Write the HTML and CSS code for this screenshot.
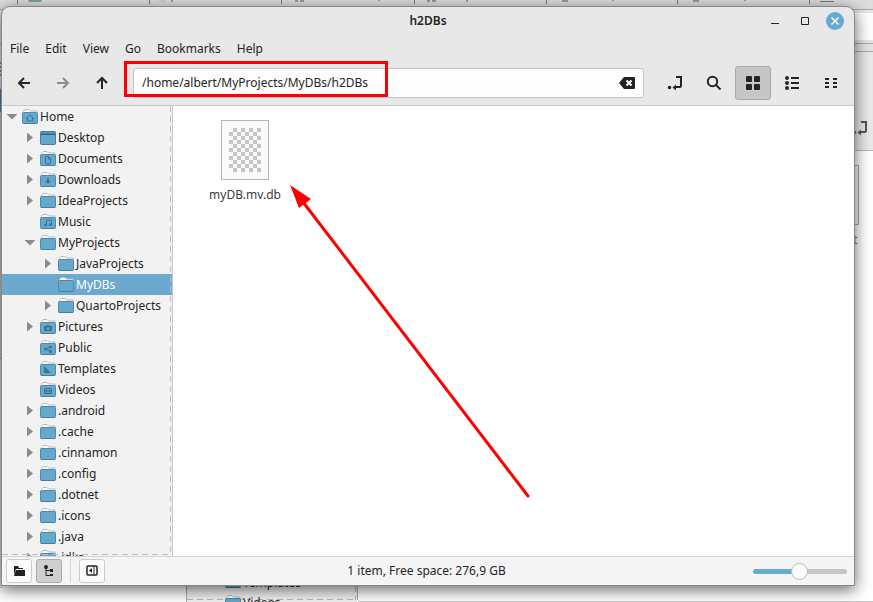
FILE: index.html
```html
<!DOCTYPE html>
<html lang="en">
<head>
<meta charset="utf-8">
<title>h2DBs</title>
<link rel="stylesheet" href="styles.css">
</head>
<body>
<svg class="defs" aria-hidden="true">
  <defs>
    <symbol id="folder" viewBox="0 0 16 16">
      <path d="M1.500 5V2.500L3 .5h4l1.500 1.500H15v3" fill="#fff" stroke="#b8b8b8"/>
      <rect x=".5" y="3.500" width="15" height="11" rx="1" fill="#66a7cc" stroke="#4b8bae"/>
      <path d="M1 14.500h14" stroke="#437f9f"/>
    </symbol>
    <symbol id="enter" viewBox="0 0 16 16">
      <path d="M9 2h5v9q0 1-1 1H8" fill="none" stroke="currentColor" stroke-width="2"/>
      <path d="M5.500 12.500L9 9.500v6z" fill="currentColor"/><circle cx="2.500" cy="12.500" r="1.800" fill="currentColor"/>
    </symbol>
  </defs>
</svg>

<svg class="backdrop" aria-hidden="true">
  <rect width="100%" height="100%" fill="#fff"/>
  <rect width="100%" height="9" fill="#dcdcdc"/>
  <rect x="0" y="9" width="8" height="80" fill="#e4e4e4"/>
  <path d="M0 9.500h6M0 43.500h6M0 88h6" stroke="#aaa"/>
  <path d="M0 63h2M0 67h2M0 71h2M0 75h2" stroke="#333"/>
  <rect y="89" width="3" height="23" fill="#4a80c8"/>
  <rect y="112" width="3" height="246" fill="#cfc8b8"/>
  <rect y="358" width="3" height="230" fill="#ddd"/>
  <path d="M0 358.500h2" stroke="#888"/>
  <path d="M17.500 0v4M149.500 0v4M281.500 0v4M414.500 0v4M546.500 0v4M677.500 0v4M809.500 0v4" stroke="#777"/>
  <path d="M28 0h14l-1 2H29z" fill="#78a39a"/>
  <path d="M295 1h3M300 1h4M427 1h3M432 1h4M562 1h6M693 1h6M171 1h2M378 0h2M466 1h2M612 0h2M744 0h2" stroke="#555"/>
  <path d="M820 1.500h14" stroke="#777"/>
  <path d="M159 1h7" stroke="#b4bfd2"/>
  <rect x="840" y="9" width="100%" height="43" fill="#e4e4e4"/>
  <path d="M840 9.500h9999M840 43.500h9999M840 51.500h9999" stroke="#aaa"/>
  <rect x="840" y="13" width="100%" height="27" fill="#fdfdfd"/>
  <rect x="840" y="52" width="100%" height="98" fill="#e8e8e8"/>
  <path d="M840 150.500h9999" stroke="#bbb"/>
  <use href="#enter" x="852" y="120" width="16" height="16" color="#555"/>
  <rect x="811.500" y="165.500" width="47" height="59" fill="#f7f7f7" stroke="#aaa"/>
  <text x="853" y="244" class="backdrop-label teal">t</text>
  <rect x="186" y="580" width="171" height="30" fill="#f2f2f2"/>
  <path d="M186.500 580v40M357.500 580v20" stroke="#aaa"/>
  <path d="M358 601.500h9999" stroke="#ccc"/>
  <path d="M187 599.500h169M355.500 586v14" stroke="#bbb" stroke-dasharray="6 4"/>
  <use href="#folder" x="225" y="573" width="16" height="16"/>
  <use href="#folder" x="225" y="595" width="16" height="16"/>
  <text x="243" y="587" class="backdrop-label">Templates</text>
  <text x="243" y="607" class="backdrop-label">Videos</text>
</svg>

<main class="window">
  <header class="titlebar">
    <h1>h2DBs</h1>
    <div class="controls">
      <button aria-label="Minimize"><svg width="18" height="18"><path d="M5 11.500h8" stroke="#222"/></svg></button>
      <button aria-label="Maximize"><svg width="18" height="18"><path d="M5.500 5.500h7v7h-7z" fill="none" stroke="#222"/></svg></button>
      <button class="close" aria-label="Close"><svg width="18" height="18"><path d="M5.500 5.500l7 7m0-7l-7 7" stroke="#fff" stroke-width="1.500"/></svg></button>
    </div>
  </header>

  <nav class="menubar" aria-label="Menu">
    <button>File</button><button>Edit</button><button>View</button><button>Go</button><button>Bookmarks</button><button>Help</button>
  </nav>

  <div class="toolbar">
    <button class="tool" aria-label="Back"><svg viewBox="0 0 16 16"><path d="M14 8H3M8 3L3 8l5 5" fill="none" stroke="currentColor" stroke-width="2"/></svg></button>
    <button class="tool dim" aria-label="Forward"><svg viewBox="0 0 16 16"><path d="M2 8h11M8 3l5 5-5 5" fill="none" stroke="currentColor" stroke-width="2"/></svg></button>
    <button class="tool" aria-label="Up"><svg viewBox="0 0 16 16"><path d="M8 14V3M3 8l5-5 5 5" fill="none" stroke="currentColor" stroke-width="2"/></svg></button>
    <div class="location">
      <input type="text" aria-label="Location" value="/home/albert/MyProjects/MyDBs/h2DBs">
      <button aria-label="Clear"><svg width="16" height="16"><path d="M5 2h10q1 0 1 1v10q0 1-1 1H5L0 8z" fill="#222"/><path d="M7.500 5.500l5 5m0-5l-5 5" stroke="#fff" stroke-width="2"/></svg></button>
    </div>
    <button class="tool" aria-label="Toggle location entry"><svg><use href="#enter"/></svg></button>
    <button class="tool" aria-label="Search"><svg viewBox="0 0 16 16"><circle cx="6.500" cy="6.500" r="4.700" fill="none" stroke="currentColor" stroke-width="2"/><path d="M10 10l4.500 4.500" stroke="currentColor" stroke-width="2"/></svg></button>
    <button class="tool active" aria-label="Icon view"><svg viewBox="0 0 16 16" fill="currentColor"><rect x="1" y="1" width="6" height="6" rx="1"/><rect x="9" y="1" width="6" height="6" rx="1"/><rect x="1" y="9" width="6" height="6" rx="1"/><rect x="9" y="9" width="6" height="6" rx="1"/></svg></button>
    <button class="tool" aria-label="List view"><svg viewBox="0 0 16 16" fill="currentColor"><circle cx="3" cy="3" r="2"/><circle cx="3" cy="8" r="2"/><circle cx="3" cy="13" r="2"/><path d="M7 2h8v2H7zM7 7h8v2H7zM7 12h8v2H7z"/></svg></button>
    <button class="tool" aria-label="Compact view"><svg viewBox="0 0 16 16" fill="currentColor"><path d="M2 3h4v2H2zM2 7h4v2H2zM2 11h4v2H2zM10 3h4v2h-4zM10 7h4v2h-4zM10 11h4v2h-4z"/></svg></button>
  </div>

  <div class="content">
    <nav class="sidebar" aria-label="Folders">
      <ul class="tree">
        <li><div class="row"><button class="twist open" aria-label="Collapse"></button><svg><use href="#folder"/><path d="M4 9.500L8 6l4 3.500M5.500 8.500V12h5V8.500" fill="none" stroke="#3b7592"/></svg><a href="#home">Home</a></div>
          <ul>
            <li><div class="row"><button class="twist" aria-label="Expand"></button><svg><rect x=".5" y="1.500" width="15" height="13" rx="1" fill="#66a7cc" stroke="#437f9f"/><path d="M1 2h14v2H1z" fill="#4f8db0"/><path d="M1 4.500h14" stroke="#2f5f79"/></svg><a href="#desktop">Desktop</a></div></li>
            <li><div class="row"><button class="twist" aria-label="Expand"></button><svg><use href="#folder"/><path d="M5.500 5.500h3l2 2v5h-5zM8.500 6v2h2" fill="none" stroke="#3b7592"/></svg><a href="#documents">Documents</a></div></li>
            <li><div class="row"><button class="twist" aria-label="Expand"></button><svg><use href="#folder"/><path d="M7 6h2v3h2l-3 3-3-3h2z" fill="#3b7592"/></svg><a href="#downloads">Downloads</a></div></li>
            <li><div class="row"><button class="twist" aria-label="Expand"></button><svg><use href="#folder"/></svg><a href="#idea">IdeaProjects</a></div></li>
            <li><div class="row"><span class="twist none"></span><svg><use href="#folder"/><path d="M6.500 11V6h5v4" fill="none" stroke="#3b7592"/><circle cx="5.500" cy="11" r="1.500" fill="#3b7592"/><circle cx="10.500" cy="10.500" r="1.500" fill="#3b7592"/></svg><a href="#music">Music</a></div></li>
            <li><div class="row"><button class="twist open" aria-label="Collapse"></button><svg><use href="#folder"/></svg><a href="#myprojects">MyProjects</a></div>
              <ul>
                <li><div class="row"><button class="twist" aria-label="Expand"></button><svg><use href="#folder"/></svg><a href="#java">JavaProjects</a></div></li>
                <li><div class="row selected"><span class="twist none"></span><svg><use href="#folder"/></svg><a href="#mydbs">MyDBs</a></div></li>
                <li><div class="row"><button class="twist" aria-label="Expand"></button><svg><use href="#folder"/></svg><a href="#quarto">QuartoProjects</a></div></li>
              </ul>
            </li>
            <li><div class="row"><button class="twist" aria-label="Expand"></button><svg><use href="#folder"/><path d="M4 7h2l1-1h2l1 1h2v5H4z" fill="#3b7592"/><circle cx="8" cy="9.500" r="1.300" fill="#66a7cc"/></svg><a href="#pictures">Pictures</a></div></li>
            <li><div class="row"><span class="twist none"></span><svg><use href="#folder"/><path d="M10.500 7L6 9l4.500 2.500" fill="none" stroke="#3b7592"/><g fill="#3b7592"><circle cx="5.500" cy="9" r="1.500"/><circle cx="10.500" cy="7" r="1.500"/><circle cx="10.500" cy="11.500" r="1.500"/></g></svg><a href="#public">Public</a></div></li>
            <li><div class="row"><span class="twist none"></span><svg><use href="#folder"/><path d="M4 5l7 7H4z" fill="#3b7592"/></svg><a href="#templates">Templates</a></div></li>
            <li><div class="row"><span class="twist none"></span><svg><use href="#folder"/><path d="M4.500 6.500h7v5h-7zM4 9h8M6.500 6v6M9.500 6v6" fill="none" stroke="#3b7592"/></svg><a href="#videos">Videos</a></div></li>
            <li><div class="row"><button class="twist" aria-label="Expand"></button><svg><use href="#folder"/></svg><a href="#android">.android</a></div></li>
            <li><div class="row"><button class="twist" aria-label="Expand"></button><svg><use href="#folder"/></svg><a href="#cache">.cache</a></div></li>
            <li><div class="row"><button class="twist" aria-label="Expand"></button><svg><use href="#folder"/></svg><a href="#cinnamon">.cinnamon</a></div></li>
            <li><div class="row"><button class="twist" aria-label="Expand"></button><svg><use href="#folder"/></svg><a href="#config">.config</a></div></li>
            <li><div class="row"><button class="twist" aria-label="Expand"></button><svg><use href="#folder"/></svg><a href="#dotnet">.dotnet</a></div></li>
            <li><div class="row"><button class="twist" aria-label="Expand"></button><svg><use href="#folder"/></svg><a href="#icons">.icons</a></div></li>
            <li><div class="row"><button class="twist" aria-label="Expand"></button><svg><use href="#folder"/></svg><a href="#dotjava">.java</a></div></li>
            <li><div class="row"><button class="twist" aria-label="Expand"></button><svg><use href="#folder"/></svg><a href="#jdks">.jdks</a></div></li>
          </ul>
        </li>
      </ul>
    </nav>
    <section class="files" aria-label="Files">
      <figure class="file">
        <svg width="48" height="60">
          <defs><pattern id="checks" x="8" y="8" width="8" height="8" patternUnits="userSpaceOnUse"><path d="M4 0h4v4H4zM0 4h4v4H0z" fill="#c6c6c6"/></pattern></defs>
          <rect x=".5" y=".5" width="47" height="59" fill="#fafafa" stroke="#b4b4b4"/>
          <rect x="8" y="8" width="32" height="44" fill="url(#checks)"/>
        </svg>
        <figcaption>myDB.mv.db</figcaption>
      </figure>
    </section>
  </div>

  <footer class="statusbar">
    <div class="side-buttons">
      <button aria-label="Places"><svg width="14" height="12"><path d="M2 1h4l1 2h4v1H4L2 10z" fill="#222"/><path d="M4 5h9v6H2z" fill="#222"/></svg></button>
      <button class="pressed" aria-label="Tree"><svg width="14" height="12"><circle cx="4" cy="2" r="2" fill="#222"/><path d="M4 3v7.500h5M4 5.500h5" fill="none" stroke="#222"/><path d="M8 4h3v3H8zM8 9h3v2H8z" fill="#222"/></svg></button>
      <span class="divider"></span>
      <button aria-label="Hide sidebar"><svg width="14" height="12"><rect x="2" y="1" width="10" height="9" rx="1" fill="none" stroke="#222" stroke-width="1.500"/><path d="M7 3v5L4 5.500z" fill="#222"/><path d="M9 1.500v8" stroke="#222"/></svg></button>
    </div>
    <output>1 item, Free space: 276,9 GB</output>
    <input class="zoom" type="range" aria-label="Zoom" min="0" max="100" value="49">
  </footer>
</main>

<svg class="annotations" aria-hidden="true">
  <rect x="125.500" y="62.500" width="261" height="33" fill="none" stroke="#f00" stroke-width="3"/>
  <path d="M303 202L528 496" stroke="#f00" stroke-width="3" stroke-linecap="round"/>
  <path d="M290 185l21 14-12 9z" fill="#f00"/>
</svg>
</body>
</html>
```
FILE: styles.css
```css
* { box-sizing: border-box; }
body {
  margin: 0;
  height: 100vh;
  padding: 6px 18px 16px 1px;
  overflow: hidden;
  font: 12px/20px "Noto Sans", sans-serif;
  color: #252525;
}
button {
  display: flex;
  align-items: center;
  justify-content: center;
  padding: 0;
  border: 0;
  background: none;
  font: inherit;
  color: inherit;
}
.defs { position: absolute; width: 0; height: 0; }
.backdrop, .annotations { position: absolute; inset: 0; width: 100%; height: 100%; }
.annotations { pointer-events: none; }
.backdrop-label { font-size: 12px; fill: #222; }
.backdrop-label.teal { fill: #16808a; }

.window {
  position: relative;
  display: flex;
  flex-direction: column;
  height: 100%;
  border: 1px solid #888;
  border-radius: 9px 9px 0 0;
  background: #e8e8e8;
  box-shadow: 0 4px 16px rgba(0, 0, 0, .6);
  overflow: hidden;
}
.titlebar {
  display: grid;
  grid-template-columns: 1fr auto 1fr;
  align-items: center;
  height: 28px;
  padding: 0 10px;
}
h1 { grid-column: 2; margin: 0; font-size: 12px; font-weight: 600; }
.controls { display: flex; justify-content: flex-end; gap: 12px; }
.close { border-radius: 50%; background: #68a9cf; }

.menubar { display: flex; gap: 16px; height: 26px; padding: 1px 8px 0; }
.toolbar {
  display: flex;
  align-items: center;
  gap: 3px;
  height: 45px;
  padding: 0 5px 0 4px;
  border-bottom: 1px solid #c8c8c8;
}
.tool { width: 36px; height: 34px; border: 1px solid transparent; border-radius: 3px; }
.tool svg { width: 16px; height: 16px; }
.dim { color: #8b8b8b; }
.active { background: #c6c6c6; border-color: #aaa; }
.location {
  display: flex;
  flex: 1;
  height: 30px;
  margin: 0 10px;
  padding: 0 8px;
  border: 1px solid #c4c4c4;
  border-radius: 3px;
  background: #fdfdfd;
}
.location input { flex: 1; min-width: 0; padding: 0; border: 0; background: none; font: inherit; color: inherit; }

.content { display: flex; flex: 1; min-height: 0; }
.sidebar {
  position: relative;
  width: 171px;
  border-right: 1px solid #c8c8c8;
  background: #f2f2f2;
  overflow: hidden;
}
.sidebar::after {
  content: "";
  position: absolute;
  inset: 0 1px 1px 0;
  background:
    repeating-linear-gradient(to bottom, #bdbdbd 0 6px, transparent 6px 10px) right / 1px 100% no-repeat,
    repeating-linear-gradient(to right, #bdbdbd 0 6px, transparent 6px 10px) bottom / 100% 1px no-repeat;
  pointer-events: none;
}
.tree, .tree ul { margin: 0; padding: 0; list-style: none; }
.tree { --indent: 2px; }
.tree ul { --indent: 20px; }
.tree ul ul { --indent: 38px; }
.row { display: flex; align-items: center; height: 21px; padding-left: var(--indent); }
.row svg { flex: none; width: 16px; height: 16px; margin: 0 2px; }
.row a { color: inherit; text-decoration: none; white-space: nowrap; }
.selected { background: #6ba9ce; color: #fff; }
.twist { flex: none; width: 16px; }
.twist::before {
  content: "";
  width: 6px;
  height: 10px;
  background: #8c8c8c;
  clip-path: polygon(0 0, 100% 50%, 0 100%);
}
.twist.open::before { width: 12px; height: 6px; clip-path: polygon(0 0, 100% 0, 50% 100%); }
.twist.none::before { content: none; }
.files { flex: 1; padding: 14px 28px; background: #fff; }
.file { display: flex; flex-direction: column; align-items: center; width: 88px; margin: 0; gap: 5px; color: #3c3c3c; }

.statusbar {
  display: grid;
  grid-template-columns: 1fr auto 1fr;
  align-items: center;
  height: 29px;
  padding: 0 7px 0 4px;
  border-top: 1px solid #d4d4d4;
  background: #f4f4f4;
}
.side-buttons { display: flex; gap: 4px; }
.side-buttons button { width: 26px; height: 24px; border: 1px solid #ccc; border-radius: 3px; background: #fcfcfc; }
.side-buttons .pressed { background: #cfcfcf; border-color: #aaa; }
.divider { width: 1px; margin: 0 4px; background: #d4d4d4; }
.zoom { justify-self: end; width: 94px; height: 17px; margin: 0; appearance: none; background: none; }
.zoom::-webkit-slider-runnable-track {
  height: 5px;
  border-radius: 3px;
  background: linear-gradient(to right, #68a9cf 50%, #c6c6c6 50%);
}
.zoom::-webkit-slider-thumb {
  appearance: none;
  width: 17px;
  height: 17px;
  margin-top: -6px;
  border: 1px solid #bbb;
  border-radius: 50%;
  background: #fcfcfc;
}
```
